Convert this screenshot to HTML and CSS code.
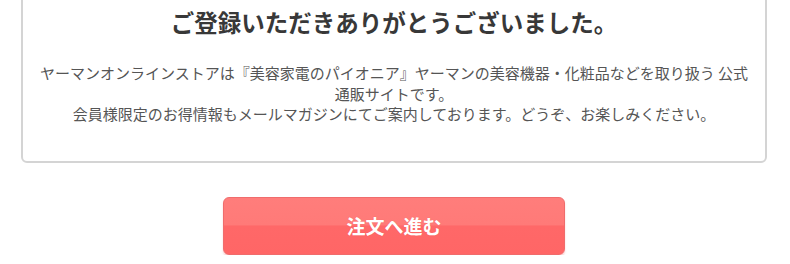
FILE: index.html
```html
<!DOCTYPE html>
<html lang="ja">
<head>
<meta charset="utf-8">
<title>ご登録完了</title>
<link rel="stylesheet" href="styles.css">
</head>
<body>
<div class="page">
  <section class="card">
    <h1 class="card-title">ご登録いただきありがとうございました。</h1>
    <p class="card-text">ヤーマンオンラインストアは『美容家電のパイオニア』ヤーマンの美容機器・化粧品などを取り扱う 公式通販サイトです。<br>会員様限定のお得情報もメールマガジンにてご案内しております。どうぞ、お楽しみください。</p>
  </section>
  <div class="actions">
    <a class="btn-order" href="#">注文へ進む</a>
  </div>
</div>
</body>
</html>
```

FILE: styles.css
```css
html, body {
  margin: 0;
  padding: 0;
  background: #fff;
}
body {
  font-family: "Noto Sans CJK JP", "Noto Sans", sans-serif;
  color: #333;
}
.page {
  width: 746px;
  margin: 0 0 0 21px;
}
.card {
  margin-top: -10px;
  border: 2px solid #d4d4d4;
  border-radius: 6px;
  padding: 13px 12px 36px;
  text-align: center;
}
.card-title {
  margin: 0;
  font-size: 23.5px;
  line-height: 34px;
  font-weight: 700;
  color: #383838;
}
.card-text {
  margin: 24px 0 0;
  font-size: 15px;
  line-height: 20.5px;
  color: #555;
}
.actions {
  display: flex;
  justify-content: center;
  margin-top: 34px;
}
.btn-order {
  display: flex;
  align-items: center;
  justify-content: center;
  width: 342px;
  height: 58px;
  box-sizing: border-box;
  border: 1px solid #f06c6c;
  border-radius: 6px;
  background: linear-gradient(to bottom, #ff7d7b 0%, #ff7a78 48%, #ff6868 50%, #ff6666 100%);
  box-shadow: 0 2px 2px rgba(240, 120, 120, 0.35);
  color: #fff;
  font-size: 19px;
  font-weight: 700;
  text-decoration: none;
  text-shadow: 0 0 1px rgba(200, 60, 60, 0.3);
}
```
